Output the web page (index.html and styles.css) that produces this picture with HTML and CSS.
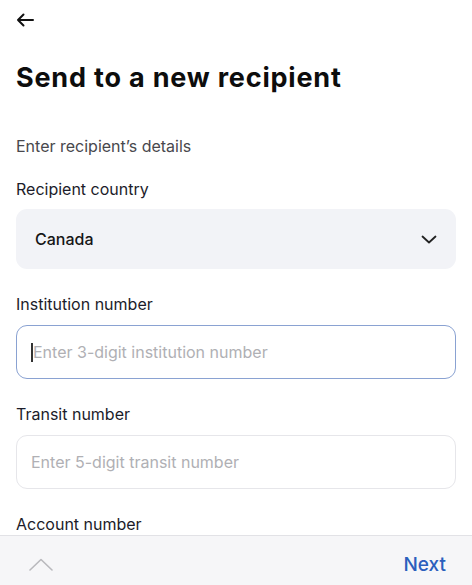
FILE: index.html
```html
<!DOCTYPE html>
<html lang="en">
<head>
<meta charset="utf-8">
<title>Send to a new recipient</title>
<link rel="stylesheet" href="styles.css">
</head>
<body>
<main class="page">
  <header class="topbar">
    <svg class="back" width="18" height="14" viewBox="0 0 18 14" aria-hidden="true">
      <path d="M17 7H2M7.5 1.5L2 7l5.5 5.5" fill="none" stroke="#111" stroke-width="2" stroke-linecap="round" stroke-linejoin="round"/>
    </svg>
  </header>
  <h1 class="title">Send to a new recipient</h1>
  <p class="subtitle">Enter recipient’s details</p>

  <section class="field">
    <div class="label">Recipient country</div>
    <div class="select">
      <span class="select-value">Canada</span>
      <svg class="chev" width="16" height="9" viewBox="0 0 16 9" aria-hidden="true">
        <path d="M1.5 1.5L8 7.5l6.5-6" fill="none" stroke="#222" stroke-width="1.8" stroke-linecap="round" stroke-linejoin="round"/>
      </svg>
    </div>
  </section>

  <section class="field">
    <div class="label">Institution number</div>
    <div class="input focused"><span class="caret"></span><span class="placeholder">Enter 3-digit institution number</span></div>
  </section>

  <section class="field">
    <div class="label">Transit number</div>
    <div class="input"><span class="placeholder">Enter 5-digit transit number</span></div>
  </section>

  <section class="field">
    <div class="label">Account number</div>
    <div class="input"><span class="placeholder">Enter account number</span></div>
  </section>
</main>

<footer class="accessory">
  <svg class="up" width="24" height="13" viewBox="0 0 24 13" aria-hidden="true">
    <path d="M1 12L12 1.5 23 12" fill="none" stroke="#b9b9bd" stroke-width="1.6" stroke-linecap="round" stroke-linejoin="round"/>
  </svg>
  <span class="next">Next</span>
</footer>
</body>
</html>
```

FILE: styles.css
```css
* { box-sizing: border-box; }
html, body {
  margin: 0;
  padding: 0;
  background: #fff;
  font-family: Inter, "Noto Sans", "Liberation Sans", sans-serif;
  color: #1a1a1a;
}
.page {
  padding: 0 16px 80px;
}
.topbar {
  height: 44px;
  display: flex;
  align-items: center;
}
.back {
  display: block;
  margin-top: -5px;
}
.title {
  margin: 18px 0 0;
  font-size: 27px;
  line-height: 32px;
  font-weight: 700;
  letter-spacing: 0.8px;
  color: #0d0d0d;
}
.subtitle {
  margin: 42px 0 0;
  font-size: 16px;
  line-height: 20px;
  color: #48484d;
}
.field {
  margin-top: 23px;
}
.field + .field { margin-top: 25px; }
.label {
  font-size: 16px;
  line-height: 20px;
  color: #1c1c2a;
}
.select {
  margin-top: 10px;
  height: 60px;
  border-radius: 11px;
  background: #f2f3f7;
  display: flex;
  align-items: center;
  justify-content: space-between;
  padding: 0 19px;
}
.select-value {
  font-size: 16px;
  color: #161616;
  font-weight: 500;
}
.input {
  margin-top: 11px;
  height: 54px;
  border-radius: 11px;
  border: 1px solid #e6e6ea;
  background: #fff;
  display: flex;
  align-items: center;
  padding: 0 14px;
}
.input.focused {
  border: 1.5px solid #8aa2d2;
}
.caret {
  width: 2px;
  height: 19px;
  background: #333;
}
.placeholder {
  font-size: 16px;
  color: #b0b0b4;
}
.accessory {
  position: fixed;
  left: 0;
  right: 0;
  bottom: 0;
  height: 50px;
  background: #f6f6f8;
  border-top: 1px solid #e2e2e6;
  display: flex;
  align-items: center;
  justify-content: space-between;
  padding: 8px 26px 0 29px;
}
.up { display: block; }
.next {
  font-size: 19px;
  color: #2b5fbd;
  font-weight: 500;
}
```
